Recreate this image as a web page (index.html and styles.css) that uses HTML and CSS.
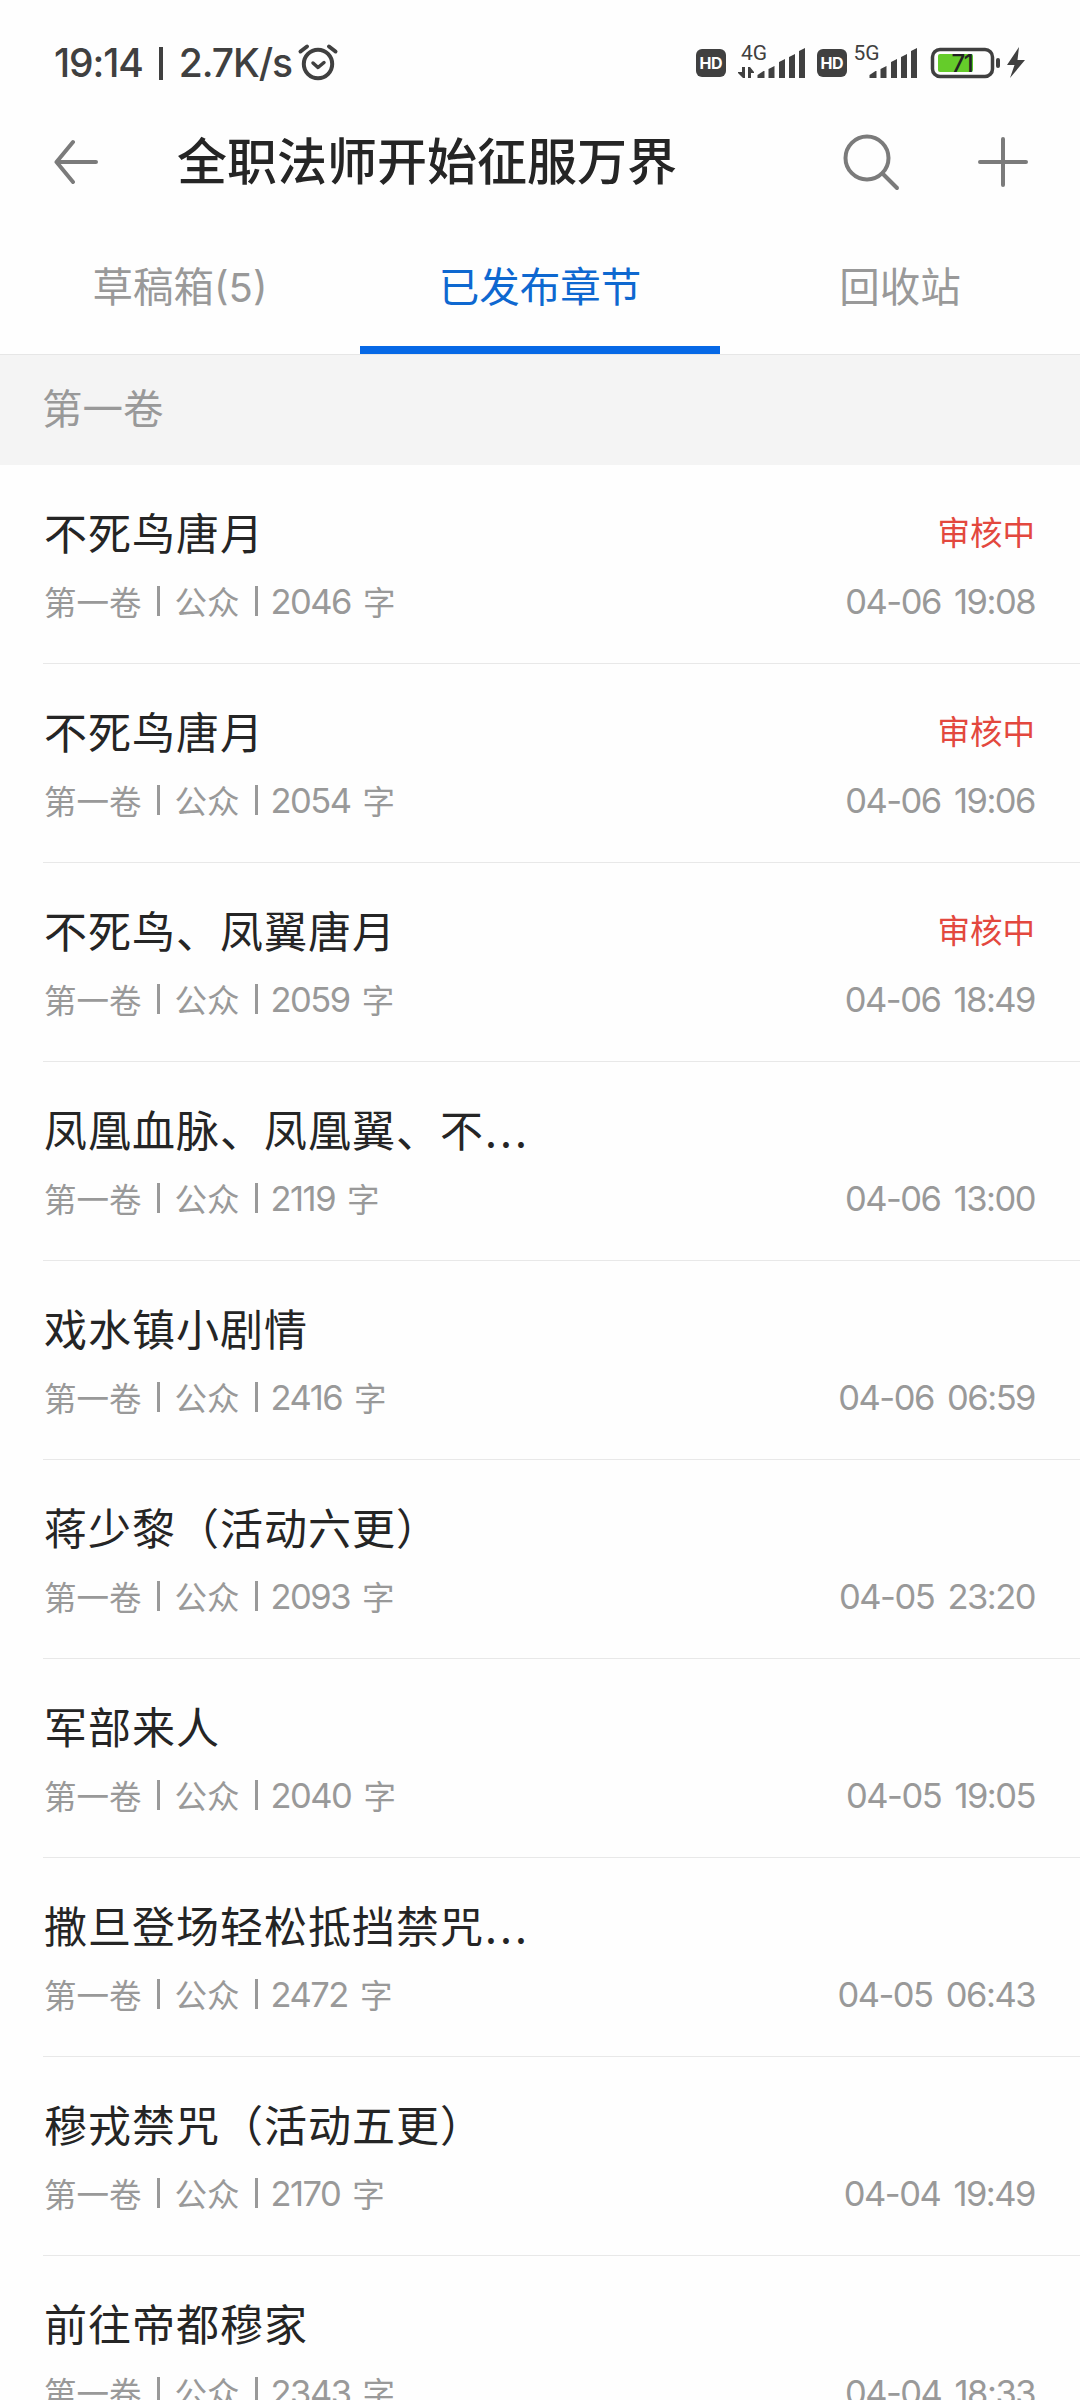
FILE: index.html
```html
<!DOCTYPE html>
<html lang="zh-CN">
<head>
<meta charset="utf-8">
<title>全职法师开始征服万界</title>
<link rel="stylesheet" href="styles.css">
</head>
<body>
<header class="status">
  <span class="status-text">19:14<i class="bar"></i>2.7K/s</span>
  <svg class="alarm" width="42" height="40" viewBox="0 0 42 40" fill="none" stroke="#404040" stroke-linecap="round">
    <circle cx="21" cy="22" r="14.2" stroke-width="4"/>
    <path d="M3.500 9.500L10 4.500M38.500 9.500L32 4.500" stroke-width="4"/>
    <path d="M16 21l5 4.500 6-5" stroke-width="3.500" stroke-linejoin="round"/>
  </svg>
  <span class="space"></span>
  <svg class="indicators" width="332" height="48" viewBox="694 36 332 48" fill="#404040">
    <rect x="696" y="49" width="30" height="28" rx="6"/>
    <text class="hd" x="699.500" y="68.800" textLength="23">HD</text>
    <text class="net" x="741" y="60">4G</text>
    <path d="M742 67h3v11h-2l-5-5v-1h4zM748 67h2l4 5v1h-3v5h-3z"/>
    <path d="M757.500 78v-3l6-4h1v7zM768.500 78V69l6-3v12zM779 78V62l6-3v19zM789 78V57l6-3v24zM799 78V51l6-3v30z"/>
    <rect x="817" y="49" width="30" height="28" rx="6"/>
    <text class="hd" x="820.500" y="68.800" textLength="23">HD</text>
    <text class="net" x="853.500" y="60">5G</text>
    <path d="M869.500 78v-3l6-4h1v7zM880.500 78V69l6-3v12zM891 78V62l6-3v19zM901 78V57l6-3v24zM911 78V51l6-3v30z"/>
    <rect x="932.500" y="49.500" width="60" height="27" rx="7.500" fill="none" stroke="#404040" stroke-width="3.500"/>
    <rect x="938" y="54" width="35" height="18" rx="2" fill="#65cc2a"/>
    <rect x="996" y="58" width="4" height="10" rx="2"/>
    <text class="level" x="951.500" y="72">71</text>
    <path d="M1019 47l-12 18h7.500l-4.500 13 15-18h-7.500z"/>
  </svg>
</header>
<nav class="topbar">
  <svg class="back" width="44" height="52" viewBox="0 0 44 52" fill="none" stroke="#7b7b7b" stroke-width="4" stroke-linecap="round" stroke-linejoin="round"><path d="M19 6L2.500 26 19 46M2.500 26H42"/></svg>
  <h1 class="book">全职法师开始征服万界</h1>
  <svg class="search" width="60" height="60" viewBox="0 0 60 60" fill="none" stroke="#7b7b7b" stroke-width="4" stroke-linecap="round"><circle cx="26" cy="26" r="21.500"/><path d="M42 42l14 14"/></svg>
  <svg class="add" width="50" height="50" viewBox="0 0 50 50" fill="none" stroke="#7b7b7b" stroke-width="4" stroke-linecap="round"><path d="M25 2v46M2 25h46"/></svg>
</nav>
<div class="tabs">
  <div class="tab">草稿箱<span class="count">(5)</span></div>
  <div class="tab active">已发布章节</div>
  <div class="tab">回收站</div>
</div>
<h2 class="volume">第一卷</h2>
<main class="list">
  <article class="row"><div class="line"><h3>不死鸟唐月</h3><em>审核中</em></div><div class="meta"><span>第一卷<i></i>公众<i></i><b>2046</b>字</span><time>04-06 19:08</time></div></article>
  <article class="row"><div class="line"><h3>不死鸟唐月</h3><em>审核中</em></div><div class="meta"><span>第一卷<i></i>公众<i></i><b>2054</b>字</span><time>04-06 19:06</time></div></article>
  <article class="row"><div class="line"><h3>不死鸟、凤翼唐月</h3><em>审核中</em></div><div class="meta"><span>第一卷<i></i>公众<i></i><b>2059</b>字</span><time>04-06 18:49</time></div></article>
  <article class="row"><div class="line"><h3>凤凰血脉、凤凰翼、不<span class="dots">...</span></h3></div><div class="meta"><span>第一卷<i></i>公众<i></i><b>2119</b>字</span><time>04-06 13:00</time></div></article>
  <article class="row"><div class="line"><h3>戏水镇小剧情</h3></div><div class="meta"><span>第一卷<i></i>公众<i></i><b>2416</b>字</span><time>04-06 06:59</time></div></article>
  <article class="row"><div class="line"><h3>蒋少黎（活动六更）</h3></div><div class="meta"><span>第一卷<i></i>公众<i></i><b>2093</b>字</span><time>04-05 23:20</time></div></article>
  <article class="row"><div class="line"><h3>军部来人</h3></div><div class="meta"><span>第一卷<i></i>公众<i></i><b>2040</b>字</span><time>04-05 19:05</time></div></article>
  <article class="row"><div class="line"><h3>撒旦登场轻松抵挡禁咒<span class="dots">...</span></h3></div><div class="meta"><span>第一卷<i></i>公众<i></i><b>2472</b>字</span><time>04-05 06:43</time></div></article>
  <article class="row"><div class="line"><h3>穆戎禁咒（活动五更）</h3></div><div class="meta"><span>第一卷<i></i>公众<i></i><b>2170</b>字</span><time>04-04 19:49</time></div></article>
  <article class="row"><div class="line"><h3>前往帝都穆家</h3></div><div class="meta"><span>第一卷<i></i>公众<i></i><b>2343</b>字</span><time>04-04 18:33</time></div></article>
</main>
</body>
</html>
```
FILE: styles.css
```css
* { box-sizing: border-box; }
html, body { height: 2400px; overflow: hidden; }
body {
  margin: 0;
  width: 1080px;
  background: #fefefe;
  color: #252525;
  font-family: "Noto Sans CJK SC", sans-serif;
}
h1, h2, h3 { margin: 0; font-weight: 400; }
svg { display: block; flex: none; }

.status {
  display: flex;
  align-items: flex-start;
  height: 112px;
  padding: 36px 54px 0 54px;
}
.status-text {
  display: flex;
  align-items: center;
  height: 42px;
  margin-top: 6px;
  font: 500 39px/42px Inter, sans-serif;
  letter-spacing: -1.1px;
  color: #404040;
  white-space: nowrap;
}
.bar { width: 4px; height: 33px; margin: 0 16px; background: #404040; }
.alarm { margin: 6px 0 0 5px; }
.space { flex: 1; }
.hd { font: 700 16px Inter, sans-serif; fill: #fff; }
.net { font: 400 21px Roboto, sans-serif; }
.level { font: 500 24px Inter, sans-serif; letter-spacing: -1.5px; fill: #222; }

.topbar {
  display: flex;
  align-items: center;
  height: 100px;
  padding: 0 52px 0 54px;
}
.book {
  margin: -8px 0 0 79px;
  flex: 1;
  font-size: 50px;
  font-weight: 500;
  line-height: 60px;
}
.add { margin-left: 77px; }

.tabs {
  display: grid;
  grid-template-columns: repeat(3, 1fr);
  height: 143px;
  border-bottom: 1px solid #e6e6e6;
}
.tab {
  height: 142px;
  padding-top: 43px;
  line-height: 60px;
  font-size: 40.5px;
  color: #999;
  text-align: center;
}
.count { font-family: Inter, sans-serif; font-size: 40px; }
.active { color: #0e68d0; border-bottom: 8px solid #0668e6; }

.volume {
  height: 110px;
  padding-left: 42px;
  background: #f4f4f4;
  color: #999;
  font-size: 40.5px;
  line-height: 104px;
}

.row {
  height: 199px;
  margin-left: 43px;
  padding: 36px 45px 0 1px;
  border-bottom: 1px solid #e8e8e8;
}
.line, .meta { display: flex; justify-content: space-between; align-items: center; }
.line { height: 60px; }
.line h3 { font-size: 43px; line-height: 60px; letter-spacing: 1px; }
.line em { font-style: normal; font-size: 32.5px; line-height: 60px; color: #e3483e; }
.dots { margin-left: 1px; letter-spacing: 3px; }
.meta { height: 48px; margin-top: 16px; color: #999; font-size: 32.5px; line-height: 48px; }
.meta span { display: flex; align-items: center; }
.meta i { width: 3px; height: 30px; margin: 0 15px; background: #999; }
.meta b, .meta time {
  padding-top: 2px;
  font: 400 34.500px/48px Inter, sans-serif;
  letter-spacing: -1.500px;
}
.meta time { word-spacing: 5px; }
.meta b { margin: 0 12px 0 -2px; }
```
